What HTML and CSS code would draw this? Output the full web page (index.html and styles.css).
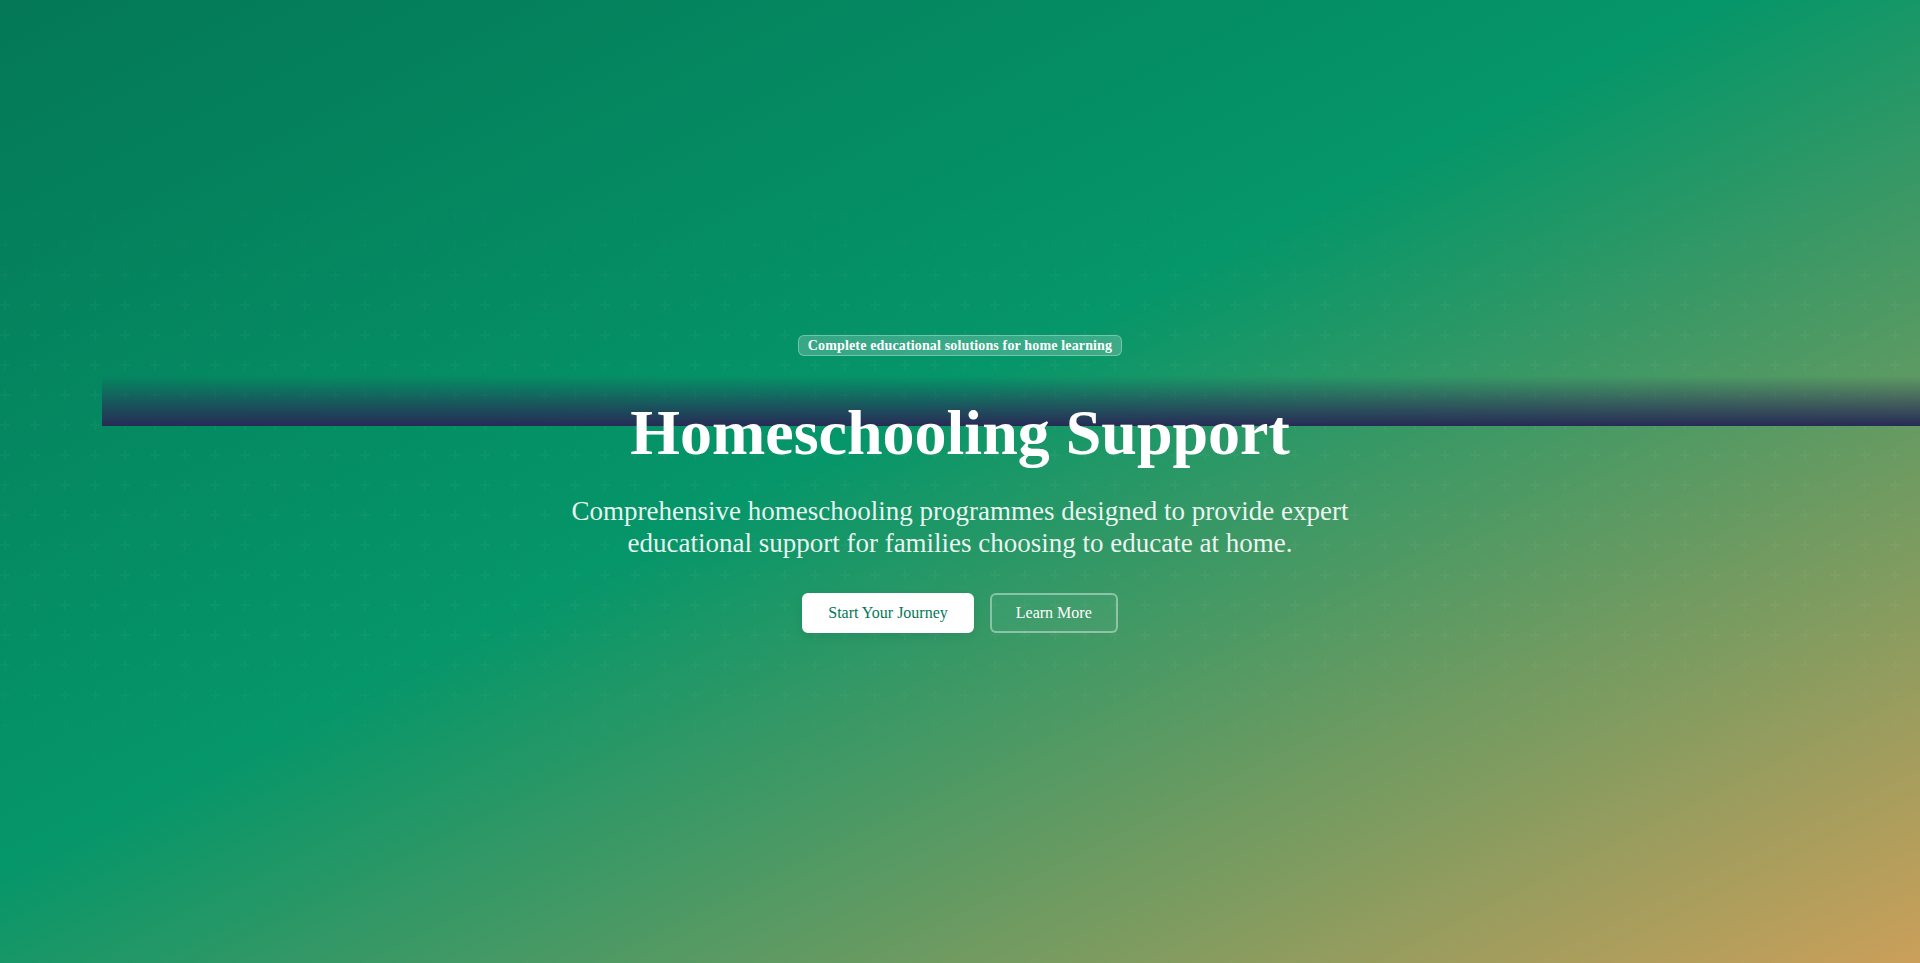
FILE: index.html
```html
<!DOCTYPE html>
<html lang="en">
<head>
<meta charset="utf-8">
<title>Homeschooling Support</title>
<link rel="stylesheet" href="styles.css">
</head>
<body>
<section class="hero">
  <div class="hero-pattern"></div>
  <div class="hero-band"></div>
  <div class="hero-content">
    <span class="badge">Complete educational solutions for home learning</span>
    <h1 class="hero-title">Homeschooling Support</h1>
    <p class="hero-text">Comprehensive homeschooling programmes designed to provide expert educational support for families choosing to educate at home.</p>
    <div class="hero-actions">
      <a class="btn btn-primary" href="#">Start Your Journey</a>
      <a class="btn btn-outline" href="#">Learn More</a>
    </div>
  </div>
</section>
</body>
</html>
```
FILE: styles.css
```css
html, body {
  margin: 0;
  padding: 0;
}
body {
  font-family: "Liberation Serif", "Times New Roman", serif;
  color: #fff;
  overflow: hidden;
}
.hero {
  position: relative;
  height: 963px;
  box-sizing: border-box;
  padding-top: 5px;
  display: flex;
  flex-direction: column;
  align-items: center;
  justify-content: center;
  overflow: hidden;
  background: linear-gradient(to bottom right, #047857 0%, #059669 45%, #cb9f5a 100%);
}
.hero-pattern {
  position: absolute;
  inset: 0;
  pointer-events: none;
  background-image: url("data:image/svg+xml,%3Csvg width='60' height='60' viewBox='0 0 60 60' xmlns='http://www.w3.org/2000/svg'%3E%3Cg fill='%23ffffff' fill-opacity='0.03'%3E%3Cpath d='M36 34v-4h-2v4h-4v2h4v4h2v-4h4v-2h-4zm0-30V0h-2v4h-4v2h4v4h2V6h4V4h-4zM6 34v-4H4v4H0v2h4v4h2v-4h4v-2H6zM6 4V0H4v4H0v2h4v4h2V6h4V4H6z'/%3E%3C/g%3E%3C/svg%3E");
  background-size: 60px 60px;
  -webkit-mask-image: linear-gradient(to bottom, transparent 18%, #000 32%, #000 66%, transparent 82%);
  mask-image: linear-gradient(to bottom, transparent 18%, #000 32%, #000 66%, transparent 82%);
}
.hero-band {
  position: absolute;
  top: 376px;
  left: 102px;
  right: 0;
  height: 50px;
  background: linear-gradient(to bottom, rgba(39, 43, 86, 0) 0%, rgba(39, 43, 86, 1) 100%);
  pointer-events: none;
}
.hero-content {
  position: relative;
  display: flex;
  flex-direction: column;
  align-items: center;
  text-align: center;
}
.badge {
  display: inline-block;
  font-size: 14px;
  line-height: 17px;
  font-weight: 700;
  letter-spacing: 0.15px;
  padding: 1px 9px;
  border: 1px solid rgba(255, 255, 255, 0.3);
  background: rgba(255, 255, 255, 0.2);
  border-radius: 6px;
  margin-bottom: 42px;
}
.hero-title {
  margin: 0 0 27px;
  font-size: 64px;
  line-height: 70px;
  font-weight: 700;
  color: #fff;
}
.hero-text {
  margin: 0 0 34px;
  max-width: 820px;
  font-size: 27px;
  line-height: 32px;
  color: rgba(255, 255, 255, 0.92);
}
.hero-actions {
  display: flex;
  gap: 16px;
}
.btn {
  display: inline-block;
  font-size: 16px;
  line-height: 20px;
  padding: 8px 24px;
  border: 2px solid transparent;
  border-radius: 6px;
  text-decoration: none;
}
.btn-primary {
  background: #fff;
  border-color: #fff;
  color: #047857;
  box-shadow: 0 4px 10px rgba(0, 0, 0, 0.08);
}
.btn-outline {
  color: #fff;
  border-color: rgba(255, 255, 255, 0.4);
  background: rgba(255, 255, 255, 0.04);
}
```
